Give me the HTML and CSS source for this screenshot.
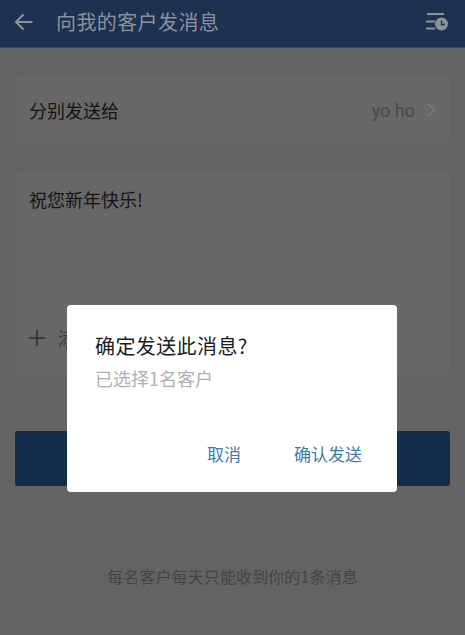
FILE: index.html
```html
<!DOCTYPE html>
<html lang="zh-CN">
<head>
<meta charset="utf-8">
<title>向我的客户发消息</title>
<link rel="stylesheet" href="styles.css">
</head>
<body>
<div class="page">
  <header class="topbar">
    <svg class="back" width="20" height="18" viewBox="0 0 20 18"><path d="M18.5 9H2M9.5 1.5 2 9l7.5 7.5" fill="none" stroke="#8b929c" stroke-width="2"/></svg>
    <h1 class="title">向我的客户发消息</h1>
    <svg class="history" width="24" height="20" viewBox="0 0 24 20"><path d="M2 2h17M1 9.500h9M1 16.500h9" fill="none" stroke="#8b929c" stroke-width="2"/><circle cx="16.500" cy="12" r="6.500" fill="#8b929c"/><path d="M16.500 8.500V12.500H20" fill="none" stroke="#1f3352" stroke-width="1.300"/></svg>
  </header>
  <main class="content">
    <section class="card recipient">
      <span class="label">分别发送给</span>
      <span class="value">yo ho</span>
      <svg class="chevron" width="9" height="14" viewBox="0 0 9 14"><path d="M1 1l6.500 6L1 13" fill="none" stroke="#7f7f7f" stroke-width="1.200"/></svg>
    </section>
    <section class="card message">
      <p class="body-text">祝您新年快乐!</p>
      <div class="attach">
        <svg width="16" height="16" viewBox="0 0 16 16"><path d="M8 0v16M0 8h16" stroke="#2f2f2f" stroke-width="1.600"/></svg>
        <span class="attach-text">添加附件</span>
      </div>
    </section>
    <div class="send-btn">发送</div>
    <p class="hint">每名客户每天只能收到你的1条消息</p>
  </main>
  <div class="dialog">
    <h2 class="dialog-title">确定发送此消息?</h2>
    <p class="dialog-sub">已选择1名客户</p>
    <div class="dialog-actions">
      <span class="action">取消</span>
      <span class="action">确认发送</span>
    </div>
  </div>
</div>
</body>
</html>
```
FILE: styles.css
```css
* { box-sizing: border-box; }
html, body { margin: 0; padding: 0; }
body { font-family: "Noto Sans CJK SC", Roboto, sans-serif; }
.page {
  position: relative;
  width: 465px;
  height: 635px;
  overflow: hidden;
  background: #636363;
}
.topbar {
  height: 48px;
  background: #1e3150;
  display: flex;
  align-items: center;
  padding: 0 16px 4px 14px;
  border-bottom: 1px solid #3e4a5c;
}
.back { flex: none; }
.title {
  margin: 0 0 0 22px;
  flex: 1;
  font-size: 20px;
  font-weight: 400;
  color: #8b929c;
  letter-spacing: .4px;
  line-height: 1;
}
.history { flex: none; }
.content {
  padding: 28px 15px 0 15px;
  display: flex;
  flex-direction: column;
}
.card {
  background: #676767;
  border-radius: 6px;
}
.recipient {
  height: 68px;
  display: flex;
  align-items: center;
  padding: 0 14px;
}
.label { flex: 1; font-size: 18px; color: #151515; }
.value { font-family: Roboto, sans-serif; font-size: 18px; color: #4a4a4a; margin-right: 12px; }
.message {
  margin-top: 28px;
  height: 204px;
  display: flex;
  flex-direction: column;
}
.body-text {
  margin: 0;
  flex: 1;
  padding: 13px 14px;
  font-size: 18px;
  line-height: 28px;
  color: #151515;
  border-bottom: 1px solid #636363;
}
.attach {
  height: 76px;
  display: flex;
  align-items: center;
  gap: 13px;
  padding-left: 14px;
}
.attach-text { font-size: 18px; color: #3c3c3c; }
.send-btn {
  margin-top: 55px;
  height: 55px;
  border-radius: 3px;
  background: #122c49;
  color: #8b929c;
  font-size: 18px;
  display: flex;
  align-items: center;
  justify-content: center;
}
.hint {
  margin: 79px 0 0;
  text-align: center;
  font-size: 16px;
  letter-spacing: .1px;
  line-height: 22px;
  color: #444444;
}
.dialog {
  position: absolute;
  left: 67px;
  top: 305px;
  width: 330px;
  height: 187px;
  padding: 26px 28px 0;
  background: #fff;
  border-radius: 4px;
  display: flex;
  flex-direction: column;
}
.dialog-title {
  margin: 0;
  font-size: 20px;
  font-weight: 400;
  letter-spacing: .4px;
  line-height: 30px;
  color: #1c1c1c;
}
.dialog-sub {
  margin: 5px 0 0;
  font-size: 18px;
  line-height: 24px;
  color: #b0b0b0;
}
.dialog-actions {
  margin-top: 51px;
  margin-right: 7px;
  display: flex;
  justify-content: flex-end;
  gap: 53px;
}
.action { font-size: 17px; line-height: 26px; color: #3f7ba8; }
```
